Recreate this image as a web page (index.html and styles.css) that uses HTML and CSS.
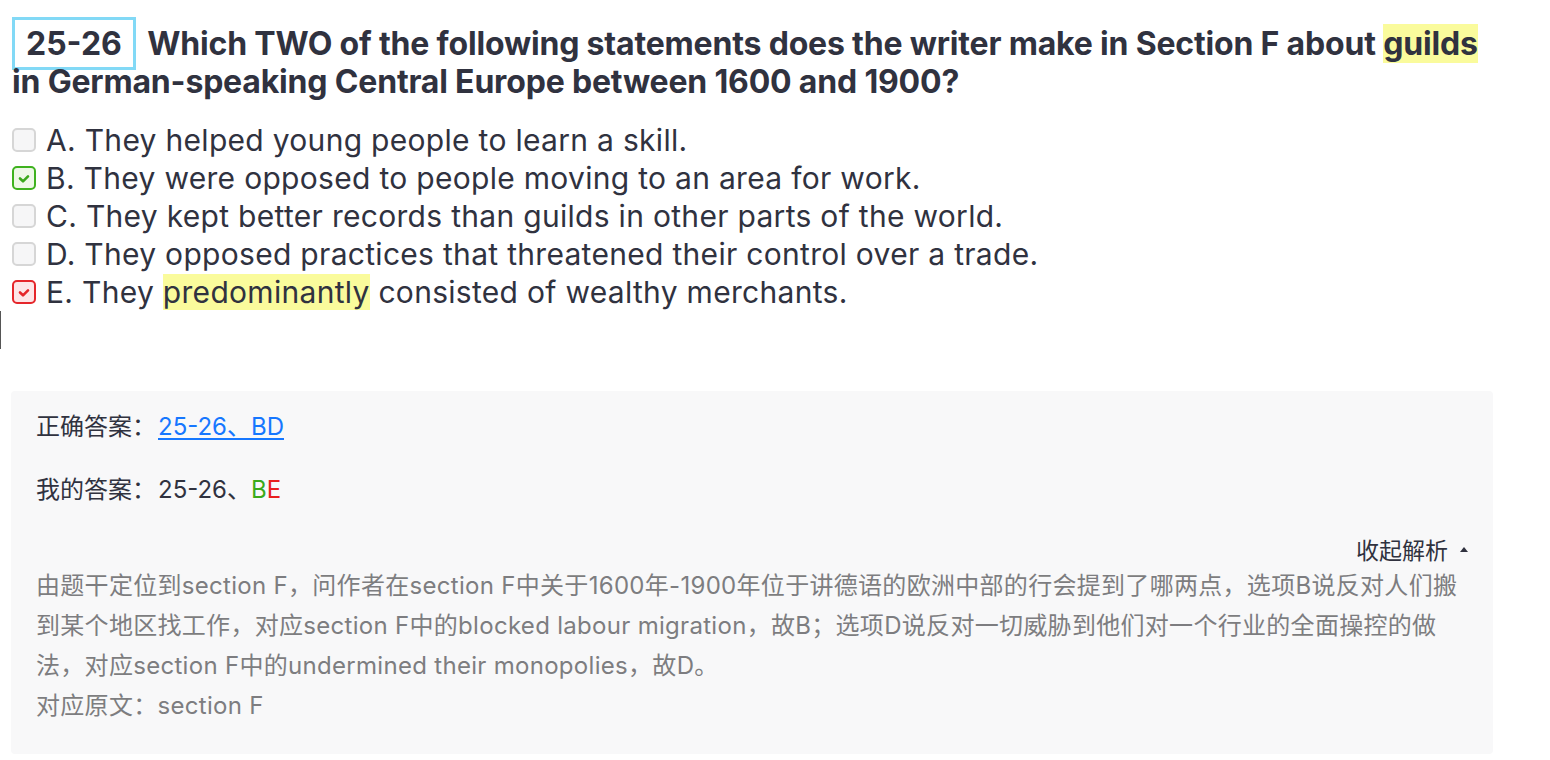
FILE: index.html
```html
<!DOCTYPE html>
<html lang="zh">
<head>
<meta charset="utf-8">
<title>25-26</title>
<link rel="stylesheet" href="styles.css">
</head>
<body>
<div class="question">
  <h2 class="title"><span class="badge">25-26</span> Which TWO of the following statements does the writer make in Section F about <span class="hl">guilds</span> in German-speaking Central Europe between 1600 and 1900?</h2>
  <ul class="options">
    <li class="option"><span class="box"></span><span class="opt-text">A. They helped young people to learn a skill.</span></li>
    <li class="option"><span class="box box-ok"><svg viewBox="0 0 20 20" width="20" height="20"><path d="M6 10.5l3 2.8 5-5" fill="none" stroke="#3aa81c" stroke-width="2.6" stroke-linecap="round" stroke-linejoin="round"/></svg></span><span class="opt-text">B. They were opposed to people moving to an area for work.</span></li>
    <li class="option"><span class="box"></span><span class="opt-text">C. They kept better records than guilds in other parts of the world.</span></li>
    <li class="option"><span class="box"></span><span class="opt-text">D. They opposed practices that threatened their control over a trade.</span></li>
    <li class="option"><span class="box box-bad"><svg viewBox="0 0 20 20" width="20" height="20"><path d="M6 10.5l3 2.8 5-5" fill="none" stroke="#e5262b" stroke-width="2.6" stroke-linecap="round" stroke-linejoin="round"/></svg></span><span class="opt-text">E. They <span class="hl">predominantly</span> consisted of wealthy merchants.</span></li>
  </ul>
  <div class="caret"></div>
</div>
<div class="panel">
  <div class="row"><span class="label">正确答案：</span><a class="answer-link" href="#">25-26、BD</a></div>
  <div class="row row-mine"><span class="label">我的答案：</span><span>25-26、<span class="ok">B</span><span class="bad">E</span></span></div>
  <div class="toggle"><span>收起解析</span><span class="tri"></span></div>
  <div class="explain">
    <p>由题干定位到section F，问作者在section F中关于1600年-1900年位于讲德语的欧洲中部的行会提到了哪两点，选项B说反对人们搬到某个地区找工作，对应section F中的blocked labour migration，故B；选项D说反对一切威胁到他们对一个行业的全面操控的做法，对应section F中的undermined their monopolies，故D。</p>
    <p>对应原文：section F</p>
  </div>
</div>
</body>
</html>
```
FILE: styles.css
```css
* { box-sizing: border-box; }
body {
  margin: 0;
  background: #fff;
  color: #30323f;
  font-family: Inter, "Noto Sans CJK SC", sans-serif;
}
.question {
  padding: 25px 0 0 12px;
  width: 1494px;
}
.title {
  margin: 0;
  font-size: 32px;
  line-height: 38px;
  font-weight: 700;
  letter-spacing: -0.18px;
}
.badge {
  border: 3px solid #82d9f6;
  padding: 4px 11px 4px;
  margin-right: 4px;
  letter-spacing: 0;
}
.hl {
  background: #fafb9c;
}
.options {
  list-style: none;
  margin: 20px 0 0;
  padding: 0;
}
.option {
  display: flex;
  align-items: center;
  height: 38px;
  font-size: 30px;
  line-height: 38px;
  letter-spacing: 0.3px;
  gap: 10px;
}
.box {
  width: 24px;
  height: 24px;
  border: 2px solid #d6d6d6;
  border-radius: 5px;
  background: #f6f6f7;
  display: flex;
  align-items: center;
  justify-content: center;
  flex: none;
  margin-top: -1px;
}
.box svg { width: 20px; height: 20px; display: block; }
.box-ok {
  border-color: #3fb21f;
  background: #eef8e8;
}
.box-bad {
  border-color: #e5262b;
  background: #fde6e8;
}
.caret {
  height: 38px;
  margin-left: -12px;
  border-left: 1.5px solid #555;
}
.panel {
  margin: 42px 0 0 11px;
  width: 1482px;
  background: #f8f8f9;
  border-radius: 4px;
  padding: 21px 25px 28px;
  font-size: 24px;
  line-height: 30px;
}
.row { color: #30323f; }
.row-mine { margin-top: 33px; }
.label { margin-right: 2px; }
.answer-link {
  color: #1677ff;
  text-decoration: underline;
  text-underline-offset: 3px;
}
.ok { color: #3aaa1a; }
.bad { color: #e8201f; }
.toggle {
  margin-top: 31px;
  display: flex;
  justify-content: flex-end;
  align-items: center;
  gap: 12px;
  padding-right: 0;
  font-size: 23px;
  color: #30323f;
}
.tri {
  width: 0;
  height: 0;
  border-left: 4px solid transparent;
  border-right: 4px solid transparent;
  border-bottom: 5px solid #30323f;
  margin-top: -4px;
}
.explain {
  color: #7d7d80;
  line-height: 40px;
  letter-spacing: 0.3px;
}
.explain p { margin: 0; }
```
